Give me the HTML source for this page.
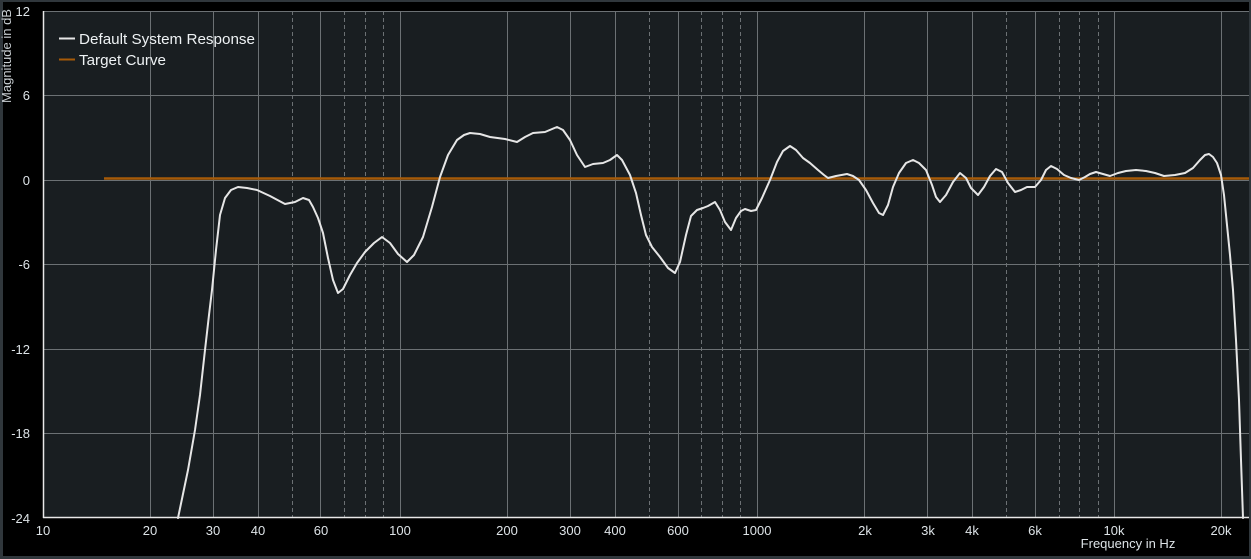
<!DOCTYPE html>
<html><head><meta charset="utf-8"><style>
html,body{margin:0;padding:0;background:#000;}
body{width:1251px;height:559px;overflow:hidden;position:relative;font-family:"Liberation Sans",sans-serif;}
svg{position:absolute;left:0;top:0;}
</style></head><body>
<svg width="1251" height="559" viewBox="0 0 1251 559" xmlns="http://www.w3.org/2000/svg">
<rect x="0" y="0" width="1251" height="559" fill="#000"/>
<rect x="0" y="0" width="1251" height="2" fill="#30373c"/>
<rect x="0" y="0" width="3" height="559" fill="#30373c"/>
<rect x="1249" y="0" width="2" height="559" fill="#30373c"/>
<rect x="0" y="556" width="1251" height="3" fill="#30373c"/>
<rect x="43" y="11" width="1206" height="507" fill="#191e21"/>
<g stroke="#6c7174" stroke-width="1">
<line x1="43" y1="11.5" x2="1249" y2="11.5"/>
<line x1="43" y1="95.5" x2="1249" y2="95.5"/>
<line x1="43" y1="180.5" x2="1249" y2="180.5"/>
<line x1="43" y1="264.5" x2="1249" y2="264.5"/>
<line x1="43" y1="349.5" x2="1249" y2="349.5"/>
<line x1="43" y1="433.5" x2="1249" y2="433.5"/>
<line x1="150.5" y1="11" x2="150.5" y2="518"/>
<line x1="213.5" y1="11" x2="213.5" y2="518"/>
<line x1="258.5" y1="11" x2="258.5" y2="518"/>
<line x1="320.5" y1="11" x2="320.5" y2="518"/>
<line x1="400.5" y1="11" x2="400.5" y2="518"/>
<line x1="507.5" y1="11" x2="507.5" y2="518"/>
<line x1="570.5" y1="11" x2="570.5" y2="518"/>
<line x1="615.5" y1="11" x2="615.5" y2="518"/>
<line x1="678.5" y1="11" x2="678.5" y2="518"/>
<line x1="757.5" y1="11" x2="757.5" y2="518"/>
<line x1="864.5" y1="11" x2="864.5" y2="518"/>
<line x1="927.5" y1="11" x2="927.5" y2="518"/>
<line x1="972.5" y1="11" x2="972.5" y2="518"/>
<line x1="1035.5" y1="11" x2="1035.5" y2="518"/>
<line x1="1114.5" y1="11" x2="1114.5" y2="518"/>
<line x1="1221.5" y1="11" x2="1221.5" y2="518"/>
</g>
<g stroke="#6c7174" stroke-width="1" stroke-dasharray="4,3">
<line x1="292.5" y1="11" x2="292.5" y2="518"/>
<line x1="344.5" y1="11" x2="344.5" y2="518"/>
<line x1="365.5" y1="11" x2="365.5" y2="518"/>
<line x1="383.5" y1="11" x2="383.5" y2="518"/>
<line x1="649.5" y1="11" x2="649.5" y2="518"/>
<line x1="701.5" y1="11" x2="701.5" y2="518"/>
<line x1="722.5" y1="11" x2="722.5" y2="518"/>
<line x1="740.5" y1="11" x2="740.5" y2="518"/>
<line x1="1006.5" y1="11" x2="1006.5" y2="518"/>
<line x1="1059.5" y1="11" x2="1059.5" y2="518"/>
<line x1="1079.5" y1="11" x2="1079.5" y2="518"/>
<line x1="1098.5" y1="11" x2="1098.5" y2="518"/>
</g>
<line x1="43.5" y1="11" x2="43.5" y2="518" stroke="#e8e8e8" stroke-width="1.5"/>
<line x1="43" y1="517.5" x2="1249" y2="517.5" stroke="#e8e8e8" stroke-width="1.5"/>
<line x1="104" y1="178.5" x2="1249" y2="178.5" stroke="#a65a08" stroke-width="2.5"/>
<polyline fill="none" stroke="#e6e6e6" stroke-width="2" stroke-linejoin="round" stroke-linecap="round" points="178,518 188,470 195,430 200,395 205,350 209,315 212,290 216,250 220,215 225,198 231,190 238,187 247,188 257,190 270,196 285,204 295,202 303,198 309,200 313,207 318,218 323,233 328,258 333,280 338,293 343,289 350,275 357,263 365,252 374,243 382,237 390,243 398,254 407,262 414,255 423,237 432,207 440,177 448,155 457,140 464,135 470,133 480,134 490,137 505,139 517,142 525,137 533,133 545,132 557,127 563,130 570,140 577,155 585,167 593,164 603,163 610,160 617,155 622,160 630,175 636,193 641,215 646,235 652,247 660,257 668,268 675,273 680,262 686,235 691,216 697,210 703,208 708,206 715,202 720,210 725,222 731,230 736,218 741,211 745,209 751,211 756,210 762,198 770,180 777,162 783,151 790,146 796,150 803,158 810,163 818,170 824,175 828,178 836,176 847,174 853,176 859,180 866,190 873,203 879,213 883,215 888,205 893,187 899,173 906,163 913,160 919,163 926,170 932,185 936,197 940,202 946,195 953,182 960,173 966,178 971,188 978,195 984,187 990,176 996,169 1002,172 1008,183 1015,192 1021,190 1027,187 1035,187 1041,180 1046,170 1051,166 1057,169 1064,175 1071,178 1079,180 1085,177 1090,174 1096,172 1103,174 1110,176 1118,173 1126,171 1136,170 1146,171 1155,173 1164,176 1175,175 1185,173 1193,168 1200,160 1205,155 1209,154 1213,157 1217,163 1221,175 1224,195 1227,225 1230,255 1233,290 1236,340 1239,400 1241,460 1243,518"/>
<g fill="#dde3e7" font-size="13" text-anchor="end">
<text x="30" y="16">12</text>
<text x="30" y="100">6</text>
<text x="30" y="185">0</text>
<text x="30" y="269">-6</text>
<text x="30" y="354">-12</text>
<text x="30" y="438">-18</text>
<text x="30" y="523">-24</text>
</g>
<g fill="#dde3e7" font-size="13" text-anchor="middle">
<text x="43" y="535">10</text>
<text x="150" y="535">20</text>
<text x="213" y="535">30</text>
<text x="258" y="535">40</text>
<text x="321" y="535">60</text>
<text x="400" y="535">100</text>
<text x="507" y="535">200</text>
<text x="570" y="535">300</text>
<text x="615" y="535">400</text>
<text x="678" y="535">600</text>
<text x="757" y="535">1000</text>
<text x="865" y="535">2k</text>
<text x="928" y="535">3k</text>
<text x="972" y="535">4k</text>
<text x="1035" y="535">6k</text>
<text x="1114" y="535">10k</text>
<text x="1221" y="535">20k</text>
<text x="1128" y="548">Frequency in Hz</text>
</g>
<text transform="translate(11,56) rotate(-90)" fill="#c8ced2" font-size="13" text-anchor="middle">Magnitude in dB</text>
<line x1="59" y1="38.5" x2="75" y2="38.5" stroke="#e6e6e6" stroke-width="2"/>
<line x1="59" y1="59.5" x2="75" y2="59.5" stroke="#a65a08" stroke-width="2"/>
<text x="79" y="44" fill="#eef2f4" font-size="15" textLength="176" lengthAdjust="spacingAndGlyphs">Default System Response</text>
<text x="79" y="65" fill="#eef2f4" font-size="15" textLength="87" lengthAdjust="spacingAndGlyphs">Target Curve</text>
</svg>
</body></html>
